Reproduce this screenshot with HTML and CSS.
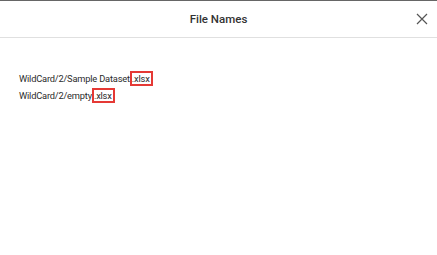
FILE: index.html
```html
<!DOCTYPE html>
<html>
<head>
  <title>File Names</title>
  <link rel="stylesheet" href="styles.css">
</head>
<body>
  <div class="dialog">
    <div class="dialog-header">
      <h1 class="dialog-title">File Names</h1>
      <button class="close-btn" aria-label="Close">
        <svg width="12" height="12" viewBox="0 0 12 12">
          <path d="M1 1 L11 11 M11 1 L1 11" stroke="#555" stroke-width="1.2" fill="none"/>
        </svg>
      </button>
    </div>
    <div class="dialog-body">
      <div class="file-row">WildCard/2/Sample Dataset<span class="ext">.xlsx</span></div>
      <div class="file-row">WildCard/2/empty<span class="ext">.xlsx</span></div>
    </div>
  </div>
</body>
</html>
```

FILE: styles.css
```css
body {
  margin: 0;
  padding: 0;
  background-color: #fff;
  font-family: Roboto, 'Liberation Sans', sans-serif;
}
.dialog {
  border-top: 1px solid #666;
  height: 254px;
  display: flex;
  flex-direction: column;
}
.dialog-header {
  height: 36px;
  border-bottom: 1px solid #e0e0e0;
  display: flex;
  align-items: center;
  justify-content: center;
  position: relative;
}
.dialog-title {
  margin: 0;
  font-size: 11.5px;
  font-weight: 500;
  color: #333;
}
.close-btn {
  position: absolute;
  right: 9px;
  top: 12px;
  border: none;
  background: transparent;
  padding: 0;
  width: 12px;
  height: 12px;
  cursor: pointer;
}
.close-btn svg {
  display: block;
}
.dialog-body {
  padding: 32px 19px 0;
}
.file-row {
  font-size: 9.3px;
  color: #2b2b2b;
  line-height: 17px;
  letter-spacing: -0.2px;
}
.ext {
  border: 2px solid #e53935;
  padding: 0 1px 0 0;
}
```
